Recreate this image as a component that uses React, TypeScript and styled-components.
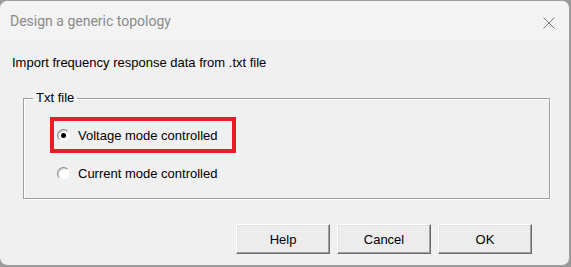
import React from "react";
import styled, { createGlobalStyle } from "styled-components";

const Global = createGlobalStyle`
  html, body { margin: 0; padding: 0; background: #9a9a9a; }
  body { width: 571px; height: 267px; overflow: hidden; }
`;

const Window = styled.div`
  box-sizing: border-box;
  width: 570px;
  height: 266px;
  background: #f0f0f0;
  border: 1px solid #9e9e9e;
  border-left: 0;
  border-radius: 8px;
  overflow: hidden;
  display: flex;
  flex-direction: column;
  font-family: "Liberation Sans", Arial, sans-serif;
`;

const TitleBar = styled.div`
  height: 39px;
  flex: none;
  background: #f3f3f3;
  display: flex;
  align-items: center;
  justify-content: space-between;
  padding: 0 14px 0 10px;
`;

const Title = styled.span`
  font-family: Roboto, "Noto Sans", sans-serif;
  font-size: 14px;
  color: #8a8a8a;
  margin-top: 1px;
`;

const CloseIcon = styled.svg`
  width: 12px;
  height: 12px;
  margin-top: 4px;
`;

const Body = styled.div`
  flex: 1;
  display: flex;
  flex-direction: column;
  padding: 15px 20px 0 12px;
  font-size: 13px;
  color: #000;
`;

const Intro = styled.div`
  line-height: 16px;
`;

const Group = styled.fieldset`
  margin: 19px 0 0 11px;
  width: 527px;
  height: 109px;
  box-sizing: border-box;
  padding: 0;
  border: 1px solid #a0a0a0;
  border-radius: 0;
  box-shadow: inset 1px 1px 0 #fff, 1px 1px 0 #fff;
`;

const Legend = styled.legend`
  padding: 0 3px;
  margin-left: 9px;
  font-size: 13px;
  line-height: 16px;
`;

const Options = styled.div`
  display: flex;
  flex-direction: column;
  gap: 4px;
  margin: 11px 0 0 33px;
`;

const Highlight = styled.div`
  align-self: flex-start;
  border: 4px solid #ed1c24;
  padding: 0 15px 0 3px;
  margin-left: -7px;
`;

const RadioRow = styled.label`
  display: flex;
  align-items: center;
  height: 28px;
  gap: 8px;
  font-size: 13px;
`;

const RadioCircle = styled.span<{ $checked?: boolean }>`
  position: relative;
  box-sizing: border-box;
  flex: none;
  width: 13px;
  height: 13px;
  border-radius: 50%;
  background: #fff;
  border: 1px solid;
  border-color: #8a8a8a #f6f6f6 #f6f6f6 #8a8a8a;
  box-shadow: inset 1px 1px 0 #cfcfcf;
  &::after {
    content: "";
    display: ${(p) => (p.$checked ? "block" : "none")};
    position: absolute;
    left: 3px;
    top: 3px;
    width: 5px;
    height: 5px;
    border-radius: 50%;
    background: #000;
  }
`;

const PlainRow = styled(RadioRow)`
  margin-top: 2px;
`;

const Buttons = styled.div`
  display: flex;
  justify-content: flex-end;
  gap: 7px;
  margin-top: 25px;
  padding-right: 17px;
`;

const Button = styled.button`
  box-sizing: border-box;
  width: 94px;
  height: 30px;
  padding: 0;
  font-family: "Liberation Sans", Arial, sans-serif;
  font-size: 13px;
  color: #000;
  background: #ececec;
  border: 1px solid;
  border-color: #fff #6a6a6a #6a6a6a #fff;
  box-shadow: inset -1px -1px 0 #a0a0a0, inset 1px 1px 0 #e3e3e3;
  border-radius: 0;
`;

export default function App() {
  return (
    <>
      <Global />
      <Window>
        <TitleBar>
          <Title>Design a generic topology</Title>
          <CloseIcon viewBox="0 0 12 12">
            <path d="M0.5 0.5 L11.5 11.5 M11.5 0.5 L0.5 11.5" stroke="#7a7a7a" strokeWidth="1" fill="none" />
          </CloseIcon>
        </TitleBar>
        <Body>
          <Intro>Import frequency response data from .txt file</Intro>
          <Group>
            <Legend>Txt file</Legend>
            <Options>
              <Highlight>
                <RadioRow>
                  <RadioCircle $checked />
                  Voltage mode controlled
                </RadioRow>
              </Highlight>
              <PlainRow>
                <RadioCircle />
                Current mode controlled
              </PlainRow>
            </Options>
          </Group>
          <Buttons>
            <Button>Help</Button>
            <Button>Cancel</Button>
            <Button>OK</Button>
          </Buttons>
        </Body>
      </Window>
    </>
  );
}
